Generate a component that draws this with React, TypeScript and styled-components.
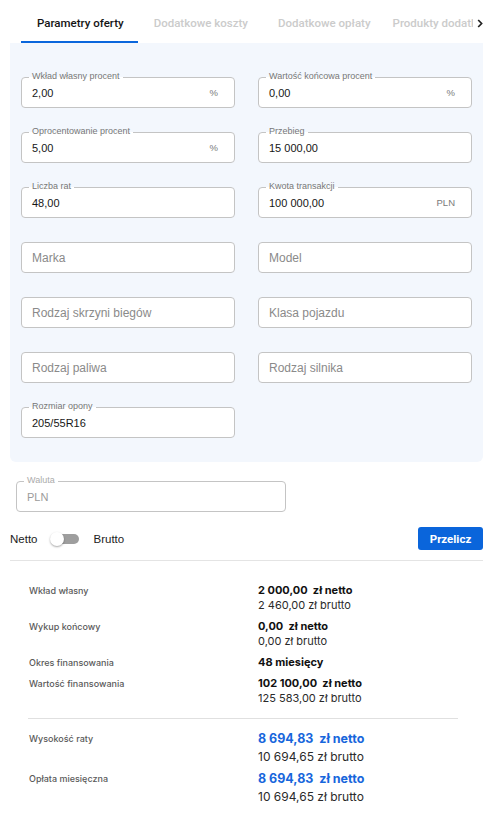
import React from 'react';
import styled, { createGlobalStyle } from 'styled-components';

const Global = createGlobalStyle`
  html, body { margin: 0; padding: 0; background: #fff; }
  body { font-family: "Liberation Sans", Arial, sans-serif; }
  * { box-sizing: border-box; }
`;

const Page = styled.div`
  width: 501px;
  padding: 0 18px 0 10px;
`;

const TabBar = styled.div`
  display: flex;
  height: 43px;
  padding-left: 11px;
`;

const TabScroller = styled.div`
  flex: 1;
  display: flex;
  overflow: hidden;
`;

const Tab = styled.div<{ $active?: boolean; $pl?: number }>`
  flex-shrink: 0;
  display: flex;
  align-items: center;
  height: 43px;
  padding: 5px 14px 0 ${(p) => p.$pl ?? 16}px;
  font-family: Roboto, "Liberation Sans", sans-serif;
  font-size: 11.5px;
  font-weight: 500;
  white-space: nowrap;
  color: ${(p) => (p.$active ? '#141414' : '#cbcbcb')};
  border-bottom: 2px solid ${(p) => (p.$active ? '#0a66dc' : 'transparent')};
`;

const ScrollBtn = styled.div`
  width: 10px;
  display: flex;
  align-items: center;
  justify-content: flex-end;
  padding-top: 3px;
`;

const Panel = styled.div`
  background: #f3f7fd;
  border-radius: 0 0 6px 6px;
  padding: 34px 11px 24px;
  display: grid;
  grid-template-columns: 1fr 1fr;
  column-gap: 23px;
  row-gap: 24px;
`;

const Field = styled.div<{ $w?: number }>`
  position: relative;
  height: 31px;
  ${(p) => (p.$w ? `width: ${p.$w}px;` : '')}
  background: #fff;
  border: 1px solid #c4c4c4;
  border-radius: 4px;
  display: flex;
  align-items: center;
  padding: 0 16px 0 10px;
`;

const FieldLabel = styled.span<{ $bg: string; $muted?: boolean }>`
  position: absolute;
  top: -7px;
  left: 7px;
  padding: 0 3px;
  font-size: 9px;
  line-height: 11px;
  color: ${(p) => (p.$muted ? '#ababab' : '#777')};
  background: linear-gradient(to bottom, ${(p) => p.$bg} 0 55%, #fff 55% 100%);
  white-space: nowrap;
`;

const Value = styled.span<{ $muted?: boolean }>`
  flex: 1;
  font-size: 11px;
  color: ${(p) => (p.$muted ? '#9b9b9b' : '#161616')};
  padding-top: 1px;
`;

const Placeholder = styled.span`
  flex: 1;
  font-size: 12px;
  color: #8a8a8a;
`;

const Suffix = styled.span`
  font-size: 9.5px;
  color: #7a7a7a;
`;

const Waluta = styled.div`
  margin: 19px 0 0 6px;
`;

const ToggleRow = styled.div`
  margin-top: 15px;
  height: 23px;
  display: flex;
  align-items: center;
  justify-content: space-between;
`;

const ToggleGroup = styled.div`
  display: flex;
  align-items: center;
  font-size: 11.5px;
  color: #222;
`;

const Switch = styled.div`
  position: relative;
  width: 30px;
  height: 14px;
  margin: 0 14px 0 12px;
`;

const Track = styled.div`
  position: absolute;
  left: 5px;
  right: 1px;
  top: 2px;
  height: 10px;
  border-radius: 5px;
  background: #9e9e9e;
`;

const Thumb = styled.div`
  position: absolute;
  left: 0;
  top: 0;
  width: 14px;
  height: 14px;
  border-radius: 50%;
  background: #fff;
  box-shadow: 0 1px 2px rgba(0, 0, 0, 0.35);
`;

const Button = styled.button`
  width: 65px;
  height: 23px;
  border: none;
  border-radius: 3px;
  background: #0a65db;
  color: #fff;
  font-family: Roboto, "Liberation Sans", sans-serif;
  font-weight: 700;
  font-size: 11.5px;
  padding: 0;
`;

const Divider = styled.div`
  height: 1px;
  background: #e4e4e4;
  margin: 10px 0 0;
`;

const Summary = styled.div`
  padding: 22px 25px 0 18px;
  font-family: Inter, "Noto Sans", sans-serif;
`;

const Section = styled.div<{ $lh: number; $gap: number }>`
  display: flex;
  flex-direction: column;
  gap: ${(p) => p.$gap}px;
  line-height: ${(p) => p.$lh}px;
`;

const Row = styled.div`
  display: grid;
  grid-template-columns: 230px 1fr;
`;

const RowLabel = styled.div`
  padding-left: 1px;
  font-size: 9px;
  font-weight: 500;
  color: #5a5a5a;
`;

const Lines = styled.div`
  display: flex;
  flex-direction: column;
`;

const Netto = styled.div<{ $big?: boolean }>`
  font-size: ${(p) => (p.$big ? 12.5 : 11)}px;
  font-weight: 700;
  color: ${(p) => (p.$big ? '#1766dc' : '#111')};
  white-space: pre;
`;

const Brutto = styled.div<{ $big?: boolean }>`
  font-size: ${(p) => (p.$big ? 12 : 11)}px;
  color: #2a2a2a;
  white-space: pre;
`;

const SectionDivider = styled.div`
  height: 1px;
  background: #e0e0e0;
  margin: 12px 0 11px;
`;

const PANEL_BG = '#f3f7fd';

type F = { label?: string; value?: string; suffix?: string; placeholder?: string };

const fields: F[] = [
  { label: 'Wkład własny procent', value: '2,00', suffix: '%' },
  { label: 'Wartość końcowa procent', value: '0,00', suffix: '%' },
  { label: 'Oprocentowanie procent', value: '5,00', suffix: '%' },
  { label: 'Przebieg', value: '15 000,00' },
  { label: 'Liczba rat', value: '48,00' },
  { label: 'Kwota transakcji', value: '100 000,00', suffix: 'PLN' },
  { placeholder: 'Marka' },
  { placeholder: 'Model' },
  { placeholder: 'Rodzaj skrzyni biegów' },
  { placeholder: 'Klasa pojazdu' },
  { placeholder: 'Rodzaj paliwa' },
  { placeholder: 'Rodzaj silnika' },
  { label: 'Rozmiar opony', value: '205/55R16' },
];

type S = { label: string; netto: string; brutto?: string };

const top: S[] = [
  { label: 'Wkład własny', netto: '2 000,00  zł netto', brutto: '2 460,00 zł brutto' },
  { label: 'Wykup końcowy', netto: '0,00  zł netto', brutto: '0,00 zł brutto' },
  { label: 'Okres finansowania', netto: '48 miesięcy' },
  { label: 'Wartość finansowania', netto: '102 100,00  zł netto', brutto: '125 583,00 zł brutto' },
];

const bottom: S[] = [
  { label: 'Wysokość raty', netto: '8 694,83  zł netto', brutto: '10 694,65 zł brutto' },
  { label: 'Opłata miesięczna', netto: '8 694,83  zł netto', brutto: '10 694,65 zł brutto' },
];

export default function App() {
  return (
    <Page>
      <Global />
      <TabBar>
        <TabScroller>
          <Tab $active>Parametry oferty</Tab>
          <Tab>Dodatkowe koszty</Tab>
          <Tab>Dodatkowe opłaty</Tab>
          <Tab $pl={8}>Produkty dodatkowe</Tab>
        </TabScroller>
        <ScrollBtn>
          <svg width="6" height="9" viewBox="0 0 6 9">
            <path d="M1.2 1 L4.6 4.5 L1.2 8" fill="none" stroke="#222" strokeWidth="1.7" />
          </svg>
        </ScrollBtn>
      </TabBar>
      <Panel>
        {fields.map((f, i) => (
          <Field key={i}>
            {f.label && <FieldLabel $bg={PANEL_BG}>{f.label}</FieldLabel>}
            {f.placeholder ? <Placeholder>{f.placeholder}</Placeholder> : <Value>{f.value}</Value>}
            {f.suffix && <Suffix>{f.suffix}</Suffix>}
          </Field>
        ))}
      </Panel>
      <Waluta>
        <Field $w={270}>
          <FieldLabel $bg="#fff" $muted>Waluta</FieldLabel>
          <Value $muted>PLN</Value>
        </Field>
      </Waluta>
      <ToggleRow>
        <ToggleGroup>
          <span>Netto</span>
          <Switch>
            <Track />
            <Thumb />
          </Switch>
          <span>Brutto</span>
        </ToggleGroup>
        <Button>Przelicz</Button>
      </ToggleRow>
      <Divider />
      <Summary>
        <Section $lh={15} $gap={6}>
          {top.map((s) => (
            <Row key={s.label}>
              <RowLabel>{s.label}</RowLabel>
              <Lines>
                <Netto>{s.netto}</Netto>
                {s.brutto && <Brutto>{s.brutto}</Brutto>}
              </Lines>
            </Row>
          ))}
        </Section>
        <SectionDivider />
        <Section $lh={18} $gap={4}>
          {bottom.map((s) => (
            <Row key={s.label}>
              <RowLabel>{s.label}</RowLabel>
              <Lines>
                <Netto $big>{s.netto}</Netto>
                <Brutto $big>{s.brutto}</Brutto>
              </Lines>
            </Row>
          ))}
        </Section>
      </Summary>
    </Page>
  );
}
